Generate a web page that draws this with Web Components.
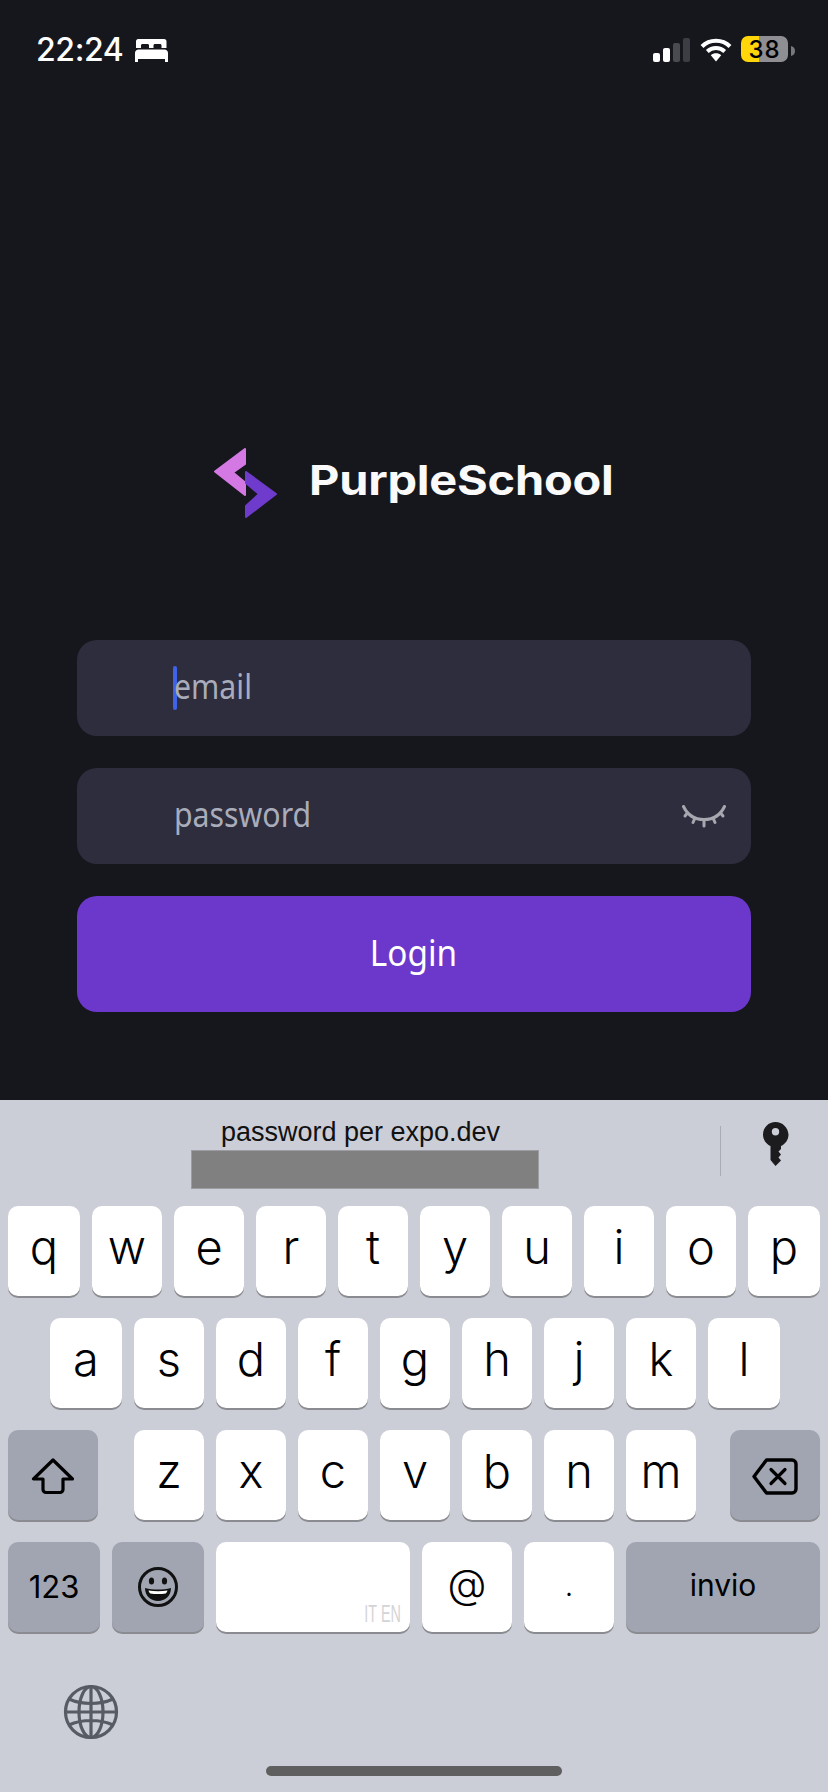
<!DOCTYPE html>
<html lang="it">
<head>
<meta charset="utf-8">
<title>PurpleSchool</title>
<style>
html,body{margin:0;padding:0;background:#16171d;}
</style>
</head>
<body>
<login-screen></login-screen>
<script>
const define=(name,html,init)=>{
  customElements.define(name,class extends HTMLElement{
    constructor(){super();this.attachShadow({mode:'open'}).innerHTML=html;}
    connectedCallback(){if(init)init(this);}
  });
};

define('ios-status-bar',`
<style>
:host{display:flex;align-items:flex-start;justify-content:space-between;height:90px;box-sizing:border-box;padding:36px 32px 0 36px;color:#fff;font-family:Inter,"Liberation Sans",sans-serif;}
.left{display:flex;align-items:center;gap:12px;height:26px;margin-top:1px}
.time{font-size:32px;font-weight:500;line-height:26px;letter-spacing:-.4px}
.right{display:flex;align-items:flex-start;}
.batt{width:47px;height:26px;border-radius:7px;background:linear-gradient(90deg,#ffd60a 0 18px,#8e8e93 18px);color:#000;font-size:24px;font-weight:500;line-height:27px;text-align:center;letter-spacing:1px}
svg{display:block}
</style>
<div class="left"><span class="time">22:24</span>
<svg width="33" height="23" viewBox="0 0 33 23"><path fill="#fff" d="M4 0h25a2.500 2.500 0 0 1 2.500 2.500V9h-5V6.500c0-1-.7-1.500-1.500-1.500h-5c-.8 0-1.500.5-1.500 1.500V9h-4.500V6.500c0-1-.7-1.500-1.500-1.500h-5c-.8 0-1.500.5-1.500 1.500V9h-5V2.500A2.500 2.500 0 0 1 4 0zM3.500 10.500h26c1.800 0 3.500 1.500 3.500 3.500v9h-3v-3H3v3H0v-9c0-2 1.700-3.500 3.500-3.500z"/></svg></div>
<div class="right">
<svg width="38" height="25" viewBox="0 0 38 25" style="margin-top:2px"><rect x="0" y="15" width="7" height="9" rx="2" fill="#fff"/><rect x="10" y="10" width="7" height="14" rx="2" fill="#fff"/><rect x="20" y="5" width="7" height="19" rx="2" fill="#4a4b50"/><rect x="30" y="0" width="7" height="24" rx="2" fill="#3d3e43"/></svg>
<svg width="32" height="24" viewBox="0 0 32 24" style="margin:2px 9px 0 9px"><g fill="none" stroke="#fff" stroke-width="4"><path d="M2 8.500C9.500 .8 22.500 .8 30 8.500"/><path d="M7.300 13.500c4.800-4.600 12.600-4.600 17.400 0"/></g><path fill="#fff" d="M10.800 17.200c3-2.500 7.400-2.500 10.400 0L16 23.500z"/></svg>
<div class="batt">38</div>
<svg width="5" height="10" viewBox="0 0 5 10" style="margin:10px 0 0 3px"><path fill="#77777c" d="M0 0c2.800.6 4 2.500 4 5s-1.200 4.400-4 5z"/></svg>
</div>`);

define('brand-logo',`
<style>
:host{display:flex;align-items:center;height:70px;padding-left:214px;color:#fafafa;}
.name{display:block;font-family:Inter,"Liberation Sans",sans-serif;font-weight:700;font-size:41px;letter-spacing:-.2px;line-height:44px;margin-left:32px;margin-top:-7px;transform:scaleX(1.145);transform-origin:left center;white-space:nowrap}
svg{display:block}
</style>
<svg width="63" height="70" viewBox="0 0 63 70"><path fill="#d479e4" stroke="#d479e4" stroke-width="2" stroke-linejoin="round" d="M1 23.500 31 1v15L19 24.500l12 10V47z"/><path fill="#6f3bcc" stroke="#6f3bcc" stroke-width="2" stroke-linejoin="round" d="M32 24 62 46 32 69V58L45 46 32 35z"/></svg>
<span class="name">PurpleSchool</span>`);

define('text-field',`
<style>
:host{display:flex;align-items:center;height:96px;box-sizing:border-box;padding:0 25px 0 97px;border-radius:20px;background:#2e2d3d;color:#a9acba;position:relative;font-family:"Noto Sans",sans-serif;font-size:34px;}
.wrap{flex:1}
.t{display:block;line-height:44px;transform:translateY(-2px) scaleX(.89);transform-origin:left center}
.caret{position:absolute;left:96px;top:26px;width:4px;height:44px;border-radius:2px;background:#3f63e8;display:none}
:host([focused]) .caret{display:block}
</style>
<span class="caret"></span><span class="wrap"><span class="t"><slot></slot></span></span><slot name="end"></slot>`);

define('primary-button',`
<style>
:host{display:flex;align-items:center;justify-content:center;height:116px;border-radius:20px;background:#6c38cc;color:#fff;font-family:"Noto Sans",sans-serif;font-size:37px;}
span{display:block;transform:scaleX(.9);margin-top:-5px;margin-right:2px}
</style><span><slot></slot></span>`);

define('kb-key',`
<style>
:host{display:flex;align-items:center;justify-content:center;flex:none;position:relative;box-sizing:border-box;height:90px;border-radius:10px;background:#fff;box-shadow:0 2px 0 #8b8c91;color:#000;font-family:Inter,"Liberation Sans",sans-serif;font-size:47px;font-weight:300;line-height:60px;}
:host([fn]){background:#a0a5b1;font-size:30px;font-weight:400;}
span{display:block;margin-top:var(--dy,-8px)}
</style><span><slot></slot></span><slot name="over"></slot>`,
el=>{el.style.width=(el.getAttribute('w')||70)+'px';
if(el.hasAttribute('dy'))el.style.setProperty('--dy',el.getAttribute('dy')+'px');
if(el.hasAttribute('fs'))el.style.fontSize=el.getAttribute('fs')+'px';});

const row=s=>[...s].map((c,i,a)=>`<kb-key w="${(i==0||i==a.length-1)&&a.length>=9?72:70}">${c}</kb-key>`).join('');

define('ios-keyboard',`
<style>
:host{display:block;height:692px;box-sizing:border-box;background:#cbced7;position:relative;font-family:"Liberation Sans",sans-serif;}
.suggest{position:relative;height:106px;}
.label{position:absolute;left:0;width:721px;top:16px;text-align:center;font-size:27px;color:#111;line-height:32px}
.mask{position:absolute;left:191px;top:50px;width:348px;height:39px;box-sizing:border-box;background:#808080;border:1px solid #9b9da3}
.div{position:absolute;left:720px;top:26px;width:1px;height:50px;background:#a9acb4}
.keyicon{position:absolute;left:762px;top:21px}
.rows{display:flex;flex-direction:column;gap:22px;padding:0 8px}
.r{display:flex;gap:12px;height:90px}
.r2{padding-left:42px}
.sp{width:12px;flex:none}
.sp2{width:10px;flex:none}
svg{display:block}
.it{position:absolute;right:9px;bottom:7px;font-family:"Liberation Sans",sans-serif;font-weight:400;font-size:24px;line-height:22px;color:#d4d4d6;transform:scaleX(.6);transform-origin:right center;white-space:nowrap}
.globe{position:absolute;left:63px;top:584px}
.home{position:absolute;left:266px;top:666px;width:296px;height:10px;border-radius:5px;background:#5f5f5f}
</style>
<div class="suggest"><div class="label">password per expo.dev</div><div class="mask"></div><div class="div"></div>
<svg class="keyicon" width="27" height="46" viewBox="0 0 27 46"><path fill="#1c1c1e" fill-rule="evenodd" d="M13.500 1C6.500 1 1 6.500 1 13.500c0 5 3 9.500 7.500 11.500v14l5 6 5.500-5.500-2.500-3 2.500-3-2.500-3 2.500-2.500V25c4.500-2 7.500-6.500 7.500-11.500C26 6.500 20.500 1 13.500 1zm0 6a3.700 3.700 0 1 1 0 7.400 3.700 3.700 0 0 1 0-7.400z"/></svg>
</div>
<div class="rows">
<div class="r">${row('qwertyuiop')}</div>
<div class="r r2">${row('asdfghjkl')}</div>
<div class="r">
<kb-key fn w="90" dy="2"><svg width="44" height="37" viewBox="0 0 44 37"><path fill="none" stroke="#000" stroke-width="3.200" stroke-linejoin="round" d="M22 2 2.500 21H12v10.500a3 3 0 0 0 3 3h14a3 3 0 0 0 3-3V21h9.500z"/></svg></kb-key>
<span class="sp"></span>
${row('zxcvbnm')}
<span class="sp2"></span>
<kb-key fn w="90" dy="2"><svg width="46" height="37" viewBox="0 0 46 37"><path fill="none" stroke="#000" stroke-width="3.400" stroke-linejoin="round" d="M14.500 2H40a4 4 0 0 1 4 4v25a4 4 0 0 1-4 4H14.500L2 18.500z"/><path stroke="#000" stroke-width="3.200" stroke-linecap="round" d="M19 11.500 33 25.500M33 11.500 19 25.500"/></svg></kb-key>
</div>
<div class="r">
<kb-key fn w="92" dy="0" fs="31">123</kb-key>
<kb-key fn w="92" dy="0"><svg width="42" height="42" viewBox="0 0 42 42"><circle cx="21" cy="21" r="18.500" fill="none" stroke="#111" stroke-width="3"/><ellipse cx="14.500" cy="15" rx="2.600" ry="3.500" fill="#111"/><ellipse cx="27.500" cy="15" rx="2.600" ry="3.500" fill="#111"/><path fill="#111" d="M8 22c8 2 18 2 26 0 0 8-6 13-13 13S8 30 8 22z"/><path fill="#fff" d="M11.500 24.500c6 1 13 1 19 0-.5 1.500-1 2.300-1.800 3-5 .7-10.400.7-15.400 0-.8-.7-1.400-1.500-1.800-3z"/></svg></kb-key>
<kb-key w="194"><span class="it" slot="over">IT EN</span></kb-key>
<kb-key w="90" fs="40" dy="-6">@</kb-key>
<kb-key w="90" fs="30" dy="-4">.</kb-key>
<kb-key fn w="194" dy="-4">invio</kb-key>
</div>
</div>
<svg class="globe" width="56" height="56" viewBox="0 0 56 56"><g fill="none" stroke="#575b64" stroke-width="3.200"><circle cx="28" cy="28" r="25.500"/><ellipse cx="28" cy="28" rx="12" ry="25.500"/><path d="M28 2.500v51M2.500 28h51M6 15c13 6 31 6 44 0M6 41c13-6 31-6 44 0"/></g></svg>
<div class="home"></div>`);

define('login-screen',`
<style>
:host{display:flex;flex-direction:column;width:828px;height:1792px;overflow:hidden;background:#16171d;}
main{height:1010px;box-sizing:border-box;padding-top:358px;display:flex;flex-direction:column}
form{display:flex;flex-direction:column;gap:32px;margin-top:122px;padding:0 77px}
svg{display:block}
</style>
<ios-status-bar></ios-status-bar>
<main>
<brand-logo></brand-logo>
<form>
<text-field focused>email</text-field>
<text-field>password
<svg slot="end" width="44" height="23" viewBox="0 0 44 23" fill="none" stroke="#a7a7b0" stroke-width="3" stroke-linecap="round"><path d="M1.500 1.500C6 11 14 14.500 22 14.500S38 11 42.500 1.500"/><path d="M5.500 8 3 11M13 13l-2 4.500M22 14.500V21M31 13l2 4.500M38.500 8l2.500 3"/></svg>
</text-field>
<primary-button>Login</primary-button>
</form>
</main>
<ios-keyboard></ios-keyboard>`);
</script>
</body>
</html>
